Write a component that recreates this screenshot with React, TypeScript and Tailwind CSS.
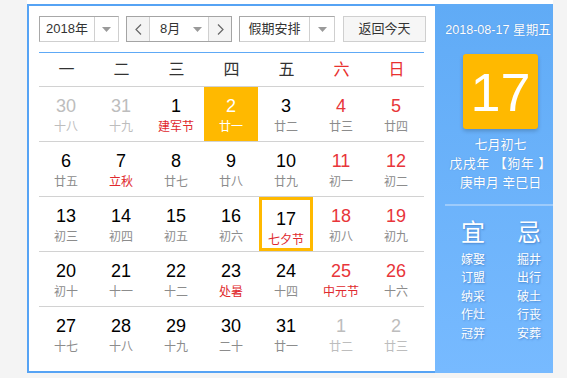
import React from "react";

type Day = {
  n: number;
  lunar: string;
  other?: boolean;
  weekend?: boolean;
  fest?: boolean;
  sel?: boolean;
  today?: boolean;
};

const weeks: Day[][] = [
  [
    { n: 30, lunar: "十八", other: true },
    { n: 31, lunar: "十九", other: true },
    { n: 1, lunar: "建军节", fest: true },
    { n: 2, lunar: "廿一", sel: true },
    { n: 3, lunar: "廿二" },
    { n: 4, lunar: "廿三", weekend: true },
    { n: 5, lunar: "廿四", weekend: true },
  ],
  [
    { n: 6, lunar: "廿五" },
    { n: 7, lunar: "立秋", fest: true },
    { n: 8, lunar: "廿七" },
    { n: 9, lunar: "廿八" },
    { n: 10, lunar: "廿九" },
    { n: 11, lunar: "初一", weekend: true },
    { n: 12, lunar: "初二", weekend: true },
  ],
  [
    { n: 13, lunar: "初三" },
    { n: 14, lunar: "初四" },
    { n: 15, lunar: "初五" },
    { n: 16, lunar: "初六" },
    { n: 17, lunar: "七夕节", fest: true, today: true },
    { n: 18, lunar: "初八", weekend: true },
    { n: 19, lunar: "初九", weekend: true },
  ],
  [
    { n: 20, lunar: "初十" },
    { n: 21, lunar: "十一" },
    { n: 22, lunar: "十二" },
    { n: 23, lunar: "处暑", fest: true },
    { n: 24, lunar: "十四" },
    { n: 25, lunar: "中元节", fest: true, weekend: true },
    { n: 26, lunar: "十六", weekend: true },
  ],
  [
    { n: 27, lunar: "十七" },
    { n: 28, lunar: "十八" },
    { n: 29, lunar: "十九" },
    { n: 30, lunar: "二十" },
    { n: 31, lunar: "廿一" },
    { n: 1, lunar: "廿二", other: true },
    { n: 2, lunar: "廿三", other: true },
  ],
];

const yi = ["嫁娶", "订盟", "纳采", "作灶", "冠笄"];
const ji = ["掘井", "出行", "破土", "行丧", "安葬"];

function Caret() {
  return (
    <svg width="9" height="5" viewBox="0 0 9 5">
      <path d="M0 0h9L4.5 5z" fill="#9a9a9a" />
    </svg>
  );
}

function Chevron({ left }: { left?: boolean }) {
  return (
    <svg width="7" height="11" viewBox="0 0 7 11">
      <path
        d={left ? "M6 0.5L1 5.5L6 10.5" : "M1 0.5L6 5.5L1 10.5"}
        fill="none"
        stroke="#666"
        strokeWidth="1.2"
      />
    </svg>
  );
}

function Cell({ d }: { d: Day }) {
  let num = "text-black";
  let lun = "text-[#8c8c8c]";
  if (d.other) {
    num = "text-[#bdbdbd]";
    lun = "text-[#bdbdbd]";
  } else if (d.weekend) num = "text-[#e8353a]";
  if (d.fest) lun = "text-[#e0282d]";
  let box = "w-[54px] h-[54px] flex flex-col items-center pt-[9px]";
  if (d.sel) {
    num = "text-white";
    lun = "text-white";
    box += " bg-[#ffb900]";
  }
  if (d.today) box += " border-[3px] border-[#ffb900] pt-[6px]";
  return (
    <div className={box}>
      <span className={`text-[18px] leading-[20px] ${num}`}>{d.n}</span>
      <span className={`text-[12px] leading-[16px] mt-[3px] ${lun}`}>{d.lunar}</span>
    </div>
  );
}

export default function App() {
  return (
    <div
      className="w-[567px] h-[378px] bg-[#f4f4f4] overflow-hidden"
      style={{ fontFamily: '"Liberation Sans", "Noto Sans CJK SC", sans-serif' }}
    >
      <div className="ml-[27px] w-[526px] bg-white pt-[4px]">
        <div className="flex h-[369px]">
          {/* left calendar */}
          <div className="w-[408px] border-l-2 border-t-2 border-b-2 border-[#56a3f4] pl-[10px] pr-[9px] pt-[10px]">
            <div className="flex h-[26px] text-[13px] text-[#333]">
              <div className="flex w-[80px] border border-t-[#a8a8a8] border-l-[#a8a8a8] border-r-[#cfcfcf] border-b-[#cfcfcf]">
                <div className="w-[54px] flex items-center justify-center">2018年</div>
                <div className="flex-1 border-l border-[#d0d0d0] flex items-center justify-center">
                  <Caret />
                </div>
              </div>
              <div className="flex w-[106px] ml-[7px] border border-[#a4a4a4]">
                <div className="w-[22px] bg-[#f4f4f4] flex items-center justify-center">
                  <Chevron left />
                </div>
                <div className="w-[60px] border-l border-r border-[#d0d0d0] flex items-center pl-[10px]">
                  <span>8月</span>
                  <span className="ml-[13px] flex">
                    <Caret />
                  </span>
                </div>
                <div className="flex-1 bg-[#f4f4f4] flex items-center justify-center">
                  <Chevron />
                </div>
              </div>
              <div className="flex w-[96px] ml-[7px] border border-t-[#a8a8a8] border-l-[#a8a8a8] border-r-[#cfcfcf] border-b-[#cfcfcf]">
                <div className="w-[69px] flex items-center justify-center">假期安排</div>
                <div className="flex-1 border-l border-[#d0d0d0] flex items-center justify-center">
                  <Caret />
                </div>
              </div>
              <div className="w-[83px] ml-[8px] border border-[#cfcfcf] bg-[#f6f6f6] flex items-center justify-center">
                返回今天
              </div>
            </div>
            <div className="mt-[10px] w-[385px] h-px bg-[#5ea9f6]" />
            <div className="w-[385px] grid grid-cols-7 h-[33px] items-center text-[16px] text-[#333]">
              {["一", "二", "三", "四", "五", "六", "日"].map((w, i) => (
                <div key={w} className={`text-center ${i > 4 ? "text-[#e8312f]" : ""}`}>
                  {w}
                </div>
              ))}
            </div>
            {weeks.map((wk, i) => (
              <div key={i} className="w-[385px] h-[55px] border-t border-[#d2d2d2] grid grid-cols-7">
                {wk.map((d, j) => (
                  <Cell key={j} d={d} />
                ))}
              </div>
            ))}
          </div>
          {/* right panel */}
          <div className="w-[118px] overflow-hidden bg-gradient-to-b from-[#60abf6] to-[#77baff] text-white">
            <div className="w-[131px] flex flex-col items-center [text-shadow:0_0_1px_rgba(40,90,160,0.5)]">
              <div className="mt-[17px] pr-[5px] text-[12.6px] leading-[18px] whitespace-nowrap">2018-08-17 星期五</div>
              <div className="mt-[15px] w-[75px] h-[75px] rounded-[3px] bg-[#ffb900] shadow-[0_2px_4px_rgba(0,0,0,0.2)] flex items-center justify-center text-[54px] leading-none [text-shadow:none]">
                17
              </div>
              <div className="mt-[6px] text-[13px] leading-[19px]">七月初七</div>
              <div className="text-[13px] leading-[19px] whitespace-nowrap tracking-[0.5px]">戊戌年 【狗年 】</div>
              <div className="text-[13px] leading-[19px]">庚申月 辛巳日</div>
            </div>
            <div className="mt-[12px] ml-[10px] w-[120px] h-[2px] bg-[#9dcbfb]" />
            <div className="flex pl-[14px] gap-[8px] [text-shadow:1px_1px_2px_rgba(30,80,150,0.45)]">
              {[
                { t: "宜", l: yi },
                { t: "忌", l: ji },
              ].map((c) => (
                <div key={c.t} className="w-[48px] flex flex-col items-center">
                  <div className="mt-[13px] text-[24px] leading-[28px]">{c.t}</div>
                  <div className="mt-[4px] flex flex-col items-center text-[12px] leading-[18.4px]">
                    {c.l.map((x) => (
                      <span key={x}>{x}</span>
                    ))}
                  </div>
                </div>
              ))}
            </div>
          </div>
        </div>
      </div>
    </div>
  );
}
